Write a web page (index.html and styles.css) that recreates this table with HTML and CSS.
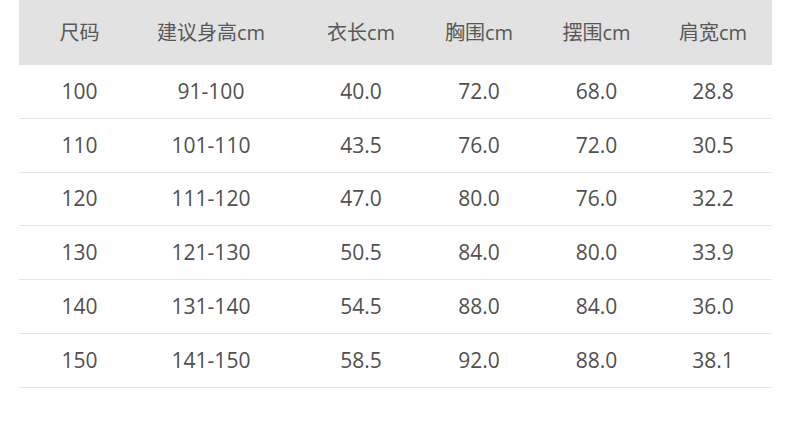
FILE: index.html
```html
<!DOCTYPE html>
<html lang="zh">
<head>
<meta charset="utf-8">
<title>尺码表</title>
<link rel="stylesheet" href="styles.css">
</head>
<body>
<div class="size-table">
  <div class="row head">
    <div class="cell">尺码</div><div class="cell">建议身高cm</div><div class="cell">衣长cm</div><div class="cell">胸围cm</div><div class="cell">摆围cm</div><div class="cell">肩宽cm</div>
  </div>
  <div class="row">
    <div class="cell">100</div><div class="cell">91-100</div><div class="cell">40.0</div><div class="cell">72.0</div><div class="cell">68.0</div><div class="cell">28.8</div>
  </div>
  <div class="row">
    <div class="cell">110</div><div class="cell">101-110</div><div class="cell">43.5</div><div class="cell">76.0</div><div class="cell">72.0</div><div class="cell">30.5</div>
  </div>
  <div class="row">
    <div class="cell">120</div><div class="cell">111-120</div><div class="cell">47.0</div><div class="cell">80.0</div><div class="cell">76.0</div><div class="cell">32.2</div>
  </div>
  <div class="row">
    <div class="cell">130</div><div class="cell">121-130</div><div class="cell">50.5</div><div class="cell">84.0</div><div class="cell">80.0</div><div class="cell">33.9</div>
  </div>
  <div class="row">
    <div class="cell">140</div><div class="cell">131-140</div><div class="cell">54.5</div><div class="cell">88.0</div><div class="cell">84.0</div><div class="cell">36.0</div>
  </div>
  <div class="row">
    <div class="cell">150</div><div class="cell">141-150</div><div class="cell">58.5</div><div class="cell">92.0</div><div class="cell">88.0</div><div class="cell">38.1</div>
  </div>
</div>
</body>
</html>
```

FILE: styles.css
```css
html, body {
  margin: 0;
  padding: 0;
  background: #ffffff;
}
body {
  font-family: "Open Sans", "Noto Sans CJK SC", sans-serif;
  font-size: 21px;
  color: #505050;
}
.size-table {
  margin-left: 19px;
  width: 753px;
}
.row {
  display: grid;
  grid-template-columns: 121px 142px 158px 78px 157px 76px 21px;
  height: 52.8px;
  align-items: center;
  border-bottom: 1px solid #e6e6e6;
}
.row.head {
  height: 65px;
  background: #e2e2e2;
  border-bottom: none;
}
.cell {
  text-align: center;
  white-space: nowrap;
  line-height: 1;
}
.head .cell {
  font-size: 20px;
  color: #585858;
}
```
